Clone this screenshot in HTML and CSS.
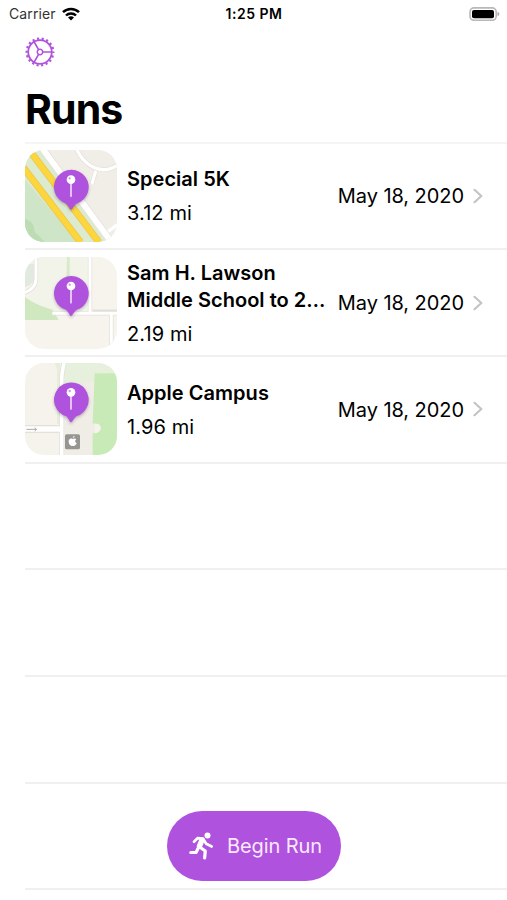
FILE: index.html
```html
<!DOCTYPE html>
<html lang="en">
<head>
<meta charset="utf-8">
<title>Runs</title>
<link rel="stylesheet" href="styles.css">
</head>
<body>
<svg class="defs" width="0" height="0" aria-hidden="true">
  <symbol id="pin" viewBox="95 65 116 140">
    <path d="M153 195C149 195 147 184 139 177A52 52 0 1 1 169 177C160 184 157 195 153 195Z" fill="#af52de"/>
    <path d="M153 117V155" stroke="#efd9f8" stroke-width="5" stroke-linecap="round"/>
    <circle cx="153" cy="105" r="13" fill="#fff"/>
    <circle cx="149" cy="101" r="3.5" fill="#cf94eb"/>
  </symbol>
  <symbol id="chevron" viewBox="0 0 10 16">
    <path d="M1.5 1.8L8.3 8L1.5 14.2" fill="none" stroke="#c4c4c7" stroke-width="2.2" stroke-linecap="round" stroke-linejoin="round"/>
  </symbol>
</svg>
<header class="status">
  <div class="carrier"><span>Carrier</span>
    <svg width="18" height="14" viewBox="0 0 18 14"><g fill="none" stroke="#000" stroke-width="2.5"><path d="M1 5.2A11.4 11.4 0 0 1 17 5.2"/><path d="M4 8.5A7 7 0 0 1 14 8.5"/></g><path d="M9 13.6L6 10.6A4.3 4.3 0 0 1 12 10.6Z"/></svg>
  </div>
  <span class="time">1:25 PM</span>
  <svg class="battery" width="31" height="14" viewBox="0 0 31 14"><rect x="1" y=".9" width="26.2" height="12.4" rx="4" fill="#fff" stroke="#b8b8b8" stroke-width="1.6"/><rect x="3" y="2.9" width="22" height="8.4" rx="2" fill="#000"/><path d="M28.5 4.8Q30.4 5.5 30.4 7T28.5 9.2Z" fill="#aaa"/></svg>
</header>
<nav class="toolbar">
  <svg width="30" height="30" viewBox="-15 -15 30 30" fill="none" stroke="#af52de">
    <circle r="11.8" stroke-width="1.8"/>
    <circle r="13.4" stroke-width="2.2" stroke-dasharray="2.1 2.577" stroke-dashoffset="1.05"/>
    <circle r="2.7" stroke-width="1.5"/>
    <path d="M2.7 0H11.5M-1.4-2.4L-5.8-10M-1.4 2.4L-5.8 10" stroke-width="1.6"/>
  </svg>
</nav>
<h1>Runs</h1>
<main class="list">
  <article class="row">
    <svg class="map" viewBox="15 16 276 276">
      <rect x="15" y="15" width="277" height="278" fill="#f1eee7"/>
      <path d="M15 15H60L260 293H15Z" fill="#dcebd0"/>
      <path d="M15 105L175 293H15Z" fill="#cfe5c8"/>
      <path d="M15 222Q45 232 43 260L75 293H15Z" fill="#bcdcb3"/>
      <g fill="none" stroke="#e2ded5" stroke-width="14"><path d="M168 10C190 60 240 95 292 62M227 78L216 118"/></g>
      <g fill="none" stroke="#fff" stroke-width="10"><path d="M168 10C190 60 240 95 292 62M227 78L216 118M292 240L262 262"/></g>
      <path d="M66 10L275 293" stroke="#e2ddd5" stroke-width="22"/>
      <path d="M66 10L275 293" stroke="#fff" stroke-width="18"/>
      <path d="M29 18L237 293M10 69L182 293" stroke="#ecc04a" stroke-width="21"/>
      <path d="M29 18L237 293M10 69L182 293" stroke="#fcd63c" stroke-width="17"/>
      <use class="pin" href="#pin" x="95" y="65" width="116" height="140"/>
    </svg>
    <div class="info"><h2>Special 5K</h2><p>3.12 mi</p></div>
    <time>May 18, 2020</time>
    <svg class="chevron"><use href="#chevron"/></svg>
  </article>
  <article class="row">
    <svg class="map" viewBox="15 15 276 276">
      <rect x="15" y="15" width="277" height="277" fill="#f6f4ec"/>
      <path d="M52 15H208V183H100L20 145L52 85Z" fill="#f2f4e9"/>
      <path d="M15 135C40 155 75 166 98 173L116 204H15Z" fill="#d0e8c0"/>
      <path d="M141 15H149V80H139Z" fill="#d6ebc8"/>
      <path d="M15 35H43V85Q35 98 15 106Z" fill="#e2eadf"/>
      <g fill="none" stroke="#e2dfd7" stroke-width="13"><path d="M48 12V80C48 105 30 116 12 123M210 12V183M97 184H292M274 187V292M218 179H292"/></g>
      <g fill="none" stroke="#fff" stroke-width="9"><path d="M48 12V80C48 105 30 116 12 123M210 12V183M97 184H292M274 187V292"/></g>
      <use class="pin" href="#pin" x="95" y="62" width="116" height="140"/>
    </svg>
    <div class="info"><h2>Sam H. Lawson<br>Middle School to 2…</h2><p>2.19 mi</p></div>
    <time>May 18, 2020</time>
    <svg class="chevron"><use href="#chevron"/></svg>
  </article>
  <article class="row">
    <svg class="map" viewBox="15 17 276 276">
      <rect x="15" y="15" width="277" height="279" fill="#f5f3eb"/>
      <path d="M131 15H225V293H131Z" fill="#efede5"/>
      <path d="M138 15H292V48H224V70L133 85L130 38Z" fill="#e6f0dc"/>
      <path d="M224 48H292V293H218V228Q241 229 243 212Q240 196 218 199Z" fill="#c8eab7"/>
      <path d="M103 15H121V200H111V35Z" fill="#e7efdb"/>
      <g fill="none" stroke="#e2dfd7" stroke-width="15"><path d="M132 13C130 35 125 43 125 66V294"/></g>
      <path d="M15 215H120" stroke="#dedbd3" stroke-width="22"/>
      <path d="M15 215H122" stroke="#fff" stroke-width="17"/>
      <path d="M132 13C130 35 125 43 125 66V294" fill="none" stroke="#fff" stroke-width="11"/>
      <path d="M19 216H48M44 211L50 216L44 221" fill="none" stroke="#aaa" stroke-width="3"/>
      <rect x="135" y="231" width="45" height="45" rx="5" fill="#979591"/>
      <path d="M158 245C152 241 145 246 146 254C147 262 153 268 158 265C163 268 168 263 170 258C164 255 164 249 169 246C166 242 161 243 158 245ZM158 242Q158 236 164 235Q164 241 158 242Z" fill="#fff"/>
      <use class="pin" href="#pin" x="95" y="65" width="116" height="140"/>
    </svg>
    <div class="info"><h2>Apple Campus</h2><p>1.96 mi</p></div>
    <time>May 18, 2020</time>
    <svg class="chevron"><use href="#chevron"/></svg>
  </article>
  <div class="row"></div>
  <div class="row"></div>
  <div class="row"></div>
  <div class="row"></div>
</main>
<button class="begin">
  <svg width="26" height="30" viewBox="0 0 26 30" fill="none" stroke="#fff" stroke-linecap="round" stroke-linejoin="round">
    <circle cx="18.5" cy="4.6" r="3" fill="#fff" stroke="none"/>
    <path d="M5 10.8L8.5 7.2L14 7.7L17.2 12.8L22.7 15.5" stroke-width="2.7"/>
    <path d="M13 9L10.5 15" stroke-width="5.4"/>
    <path d="M11 16.2L16.3 20L15.6 27" stroke-width="3.2"/>
    <path d="M9 17.5L7 21.5H1.8" stroke-width="3.2"/>
  </svg>
  <span>Begin Run</span>
</button>
</body>
</html>
```

FILE: styles.css
```css
* { box-sizing: border-box; }
body {
  margin: 0;
  height: 900px;
  overflow: hidden;
  position: relative;
  background: #fff;
  color: #000;
  font-family: Inter, "Liberation Sans", sans-serif;
}
h1, h2, p { margin: 0; }
svg { display: block; flex: none; }
.defs { position: absolute; }
.status {
  height: 27px;
  padding: 0 7px 0 9px;
  display: grid;
  grid-template-columns: 1fr auto 1fr;
  align-items: center;
  font-size: 14px;
}
.carrier { display: flex; align-items: center; gap: 6px; color: #333; }
.carrier span { letter-spacing: 0.1px; }
.time { font-weight: 600; letter-spacing: 0.5px; margin-right: 1px; }
.battery { justify-self: end; }
.toolbar { height: 57px; padding: 10px 25px; }
h1 {
  height: 57.6px;
  padding-left: 25px;
  font-size: 41px;
  line-height: 50px;
  font-weight: 700;
  letter-spacing: -0.9px;
}
.list { margin-left: 25px; border-top: 2px solid #f5f5f5; }
.row {
  height: 106.67px;
  border-bottom: 2px solid #f0f0f0;
  padding-right: 24px;
  display: flex;
  align-items: center;
}
.map { width: 92px; height: 92px; border-radius: 19px; }
.pin { filter: drop-shadow(0 4px 5px rgb(70 40 90 / 35%)); }
.info { flex: 1; margin-left: 10px; padding-top: 2px; white-space: nowrap; }
h2 { font-size: 20px; line-height: 27px; font-weight: 600; letter-spacing: 0.03px; }
p { margin-top: 7px; font-size: 20px; line-height: 27px; letter-spacing: 0.1px; }
time { font-size: 20px; letter-spacing: -0.06px; padding-top: 1px; white-space: nowrap; }
.chevron { width: 10px; height: 16px; margin-left: 9px; }
.begin {
  position: absolute;
  left: 167px;
  top: 811px;
  width: 174px;
  height: 70px;
  border: 0;
  border-radius: 35px;
  background: #af52de;
  color: #fbe9ff;
  padding: 0 19px 0 22px;
  display: flex;
  align-items: center;
  justify-content: space-between;
  font: 400 20px Inter, "Liberation Sans", sans-serif;
  letter-spacing: -0.08px;
  white-space: nowrap;
}
```
